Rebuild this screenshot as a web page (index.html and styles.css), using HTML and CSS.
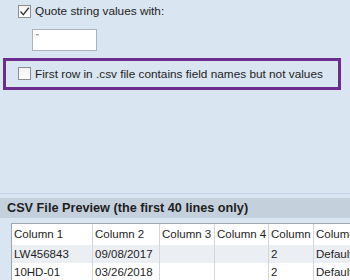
FILE: index.html
```html
<!DOCTYPE html>
<html>
<head>
<meta charset="utf-8">
<link rel="stylesheet" href="styles.css">
</head>
<body>
<div class="page">
  <div class="options">
    <label class="check-row">
      <span class="checkbox checked">
        <svg width="11" height="11" viewBox="0 0 11 11"><path d="M1.5 5.5 L4.3 8.6 L9.8 1.8" fill="none" stroke="#3a3a3a" stroke-width="1.4"/></svg>
      </span>
      <span class="label">Quote string values with:</span>
    </label>
    <div class="textbox">"</div>
  </div>
  <div class="highlight">
    <label class="check-row">
      <span class="checkbox"></span>
      <span class="label">First row in .csv file contains field names but not values</span>
    </label>
  </div>
  <div class="spacer"></div>
  <div class="divider"></div>
  <div class="section-header">CSV File Preview (the first 40 lines only)</div>
  <div class="preview">
    <div class="grid">
      <div class="cell head">Column 1</div>
      <div class="cell head">Column 2</div>
      <div class="cell head">Column 3</div>
      <div class="cell head">Column 4</div>
      <div class="cell head">Column</div>
      <div class="cell head">Column</div>
      <div class="cell alt">LW456843</div>
      <div class="cell alt">09/08/2017</div>
      <div class="cell alt"></div>
      <div class="cell alt"></div>
      <div class="cell alt">2</div>
      <div class="cell alt">Default</div>
      <div class="cell">10HD-01</div>
      <div class="cell">03/26/2018</div>
      <div class="cell"></div>
      <div class="cell"></div>
      <div class="cell">2</div>
      <div class="cell">Default</div>
    </div>
  </div>
</div>
</body>
</html>
```
FILE: styles.css
```css
html, body {
  margin: 0;
  padding: 0;
}
body {
  width: 350px;
  height: 280px;
  overflow: hidden;
  background: #d9e5f1;
  font-family: "Liberation Sans", Arial, sans-serif;
  font-size: 11.8px;
  color: #1e1e1e;
}
.page {
  display: flex;
  flex-direction: column;
  height: 280px;
}
.options {
  padding: 4px 0 0 18px;
}
.check-row {
  display: flex;
  align-items: center;
  gap: 4px;
  height: 14px;
}
.checkbox {
  box-sizing: border-box;
  width: 13px;
  height: 13px;
  border: 1px solid #8e8f8f;
  background: linear-gradient(#f2f2f2, #ffffff);
  display: flex;
  align-items: center;
  justify-content: center;
  flex: none;
}
.label {
  white-space: nowrap;
  line-height: 14px;
}
.textbox {
  box-sizing: border-box;
  margin: 11px 0 0 14px;
  width: 65px;
  height: 22px;
  background: #ffffff;
  border: 1px solid #a9b3bd;
  font-size: 8px;
  line-height: 10px;
  padding: 2px 0 0 3px;
  color: #444;
}
.highlight {
  box-sizing: border-box;
  margin: 7px 0 0 3px;
  width: 338px;
  height: 32px;
  border: 3px solid #6a2c8f;
  padding: 0 0 0 12px;
  display: flex;
  align-items: center;
}
.spacer {
  height: 103px;
  flex: none;
}
.divider {
  height: 1px;
  background: #c4d3e3;
  margin-bottom: 4px;
  flex: none;
}
.section-header {
  height: 20px;
  flex: none;
  background: #c4d0dc;
  font-weight: bold;
  font-size: 12.7px;
  line-height: 20px;
  padding-left: 7px;
  white-space: nowrap;
}
.preview {
  padding: 5px 0 0 11px;
  overflow: hidden;
}
.grid {
  display: grid;
  grid-template-columns: 81px 67px 55px 54px 45px 70px;
  width: 373px;
  background: #ffffff;
  border-top: 1px solid #a0a6ad;
  border-left: 1px solid #a0a6ad;
  font-size: 11.5px;
}
.cell {
  box-sizing: border-box;
  height: 18px;
  line-height: 18px;
  padding-left: 2px;
  border-right: 1px solid #d3d6da;
  white-space: nowrap;
  overflow: hidden;
}
.cell.head {
  height: 21px;
  line-height: 21px;
}
.cell.alt {
  background: #ebeff3;
}
```
